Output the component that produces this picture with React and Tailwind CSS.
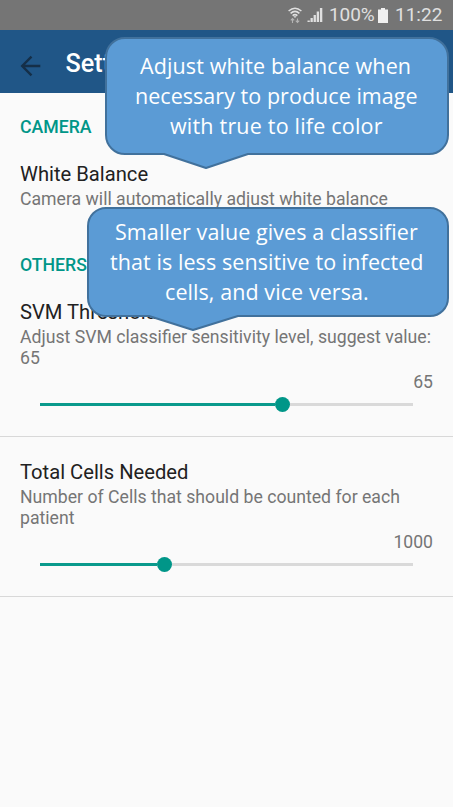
import React from 'react';

function StatusBar() {
  return (
    <div className="flex h-[30px] items-center bg-[#757575] pl-[287px] text-[#e0e0e0]">
      <svg width="16" height="18" viewBox="0 0 16 18" fill="none" stroke="#e0e0e0" strokeWidth="1.5">
        <path d="M1.6 5Q8 -.6 14.4 5M3.600 7.400Q8 3.400 12.400 7.400M5.600 9.600Q8 7.600 10.400 9.600" />
        <path d="M6.400 10.200h3.200L8 12z" fill="#e0e0e0" stroke="none" />
        <path d="M5.500 17v-4.500M3.800 14.400l1.700-1.800 1.700 1.800M10.500 12.500v4M8.800 14.700l1.700 1.800 1.700-1.800" stroke="#b4b4b4" strokeWidth="1.1" />
      </svg>
      <svg className="ml-1" width="17" height="16" viewBox="0 0 17 16" fill="#e0e0e0">
        <path d="M.5 13.500h2.300V15H.5zM3.500 11h2.300v4H3.500zM6.600 8h2.300v7H6.600zM9.700 4.500H12V15H9.700zM12.900 1h2.400v14h-2.400z" />
      </svg>
      <span className="ml-[5px] w-[46px] whitespace-nowrap text-[19px] leading-[30px] tracking-[-0.1px]">100%</span>
      <svg className="ml-[3px]" width="10" height="15" viewBox="0 0 10 15" fill="#f0f0f0">
        <path d="M3 0h4v1.500h3V15H0V1.500h3z" />
      </svg>
      <span className="ml-[7px] text-[19px] leading-[30px]">11:22</span>
    </div>
  );
}

function AppBar() {
  return (
    <div className="flex h-[63px] items-center bg-[#205687] pl-5">
      <svg className="mt-[8px]" width="21" height="22" viewBox="0 0 21 22" fill="none" stroke="#152f48" strokeWidth="2.4">
        <path d="M11.500 1.700 2.200 11l9.300 9.300M2 11h18.300" />
      </svg>
      <h1 className="ml-[24.500px] mt-1 text-[25.200px] font-medium leading-8 text-white">Settings</h1>
    </div>
  );
}

function Category({ children }) {
  return <h2 className="text-[17.700px] font-medium leading-[21px] text-[#009688]">{children}</h2>;
}

function Heading({ title, summary }) {
  return (
    <div>
      <h3 className="text-[20.200px] leading-6 text-[#212121]">{title}</h3>
      <p className="mt-[3px] text-[17.660px] leading-[21px] text-[#757575]">{summary}</p>
    </div>
  );
}

function SliderSetting({ title, summary, value, position }) {
  return (
    <section className="h-[160px] border-b border-[#d8d8d8] px-5 pt-[23px]">
      <Heading title={title} summary={summary} />
      <div className="mt-[3px] text-right text-[17.600px] leading-[21px] text-[#757575]">{value}</div>
      <div className="mx-5 mt-[4px] flex h-[15px] items-center">
        <div className="h-[3px] bg-[#0a9a8c]" style={{ width: position - 7.5 }} />
        <div className="size-[15px] rounded-full bg-[#009688]" />
        <div className="h-[3px] flex-1 bg-[#d9d9d9]" />
      </div>
    </section>
  );
}

function Callout({ className, path, height, width, children }) {
  return (
    <div className={`absolute ${className}`}>
      <svg className="absolute left-0 top-0" width={width} height={height}>
        <path d={path} fill="#5b9bd5" stroke="#41719c" strokeWidth="2" strokeLinejoin="round" />
      </svg>
      <div className="relative flex flex-col whitespace-nowrap font-['Open_Sans','Noto_Sans',sans-serif] text-[21.500px] font-medium leading-[30px] text-white">
        {children}
      </div>
    </div>
  );
}

export default function App() {
  return (
    <main className="relative h-[807px] w-[453px] overflow-hidden bg-[#fafafa] font-['Roboto',sans-serif]">
      <StatusBar />
      <AppBar />
      <div className="px-5 pt-[24px]">
        <Category>CAMERA</Category>
        <div className="mt-[24px]">
          <Heading title="White Balance" summary="Camera will automatically adjust white balance" />
        </div>
        <div className="mt-[45px]">
          <Category>OTHERS</Category>
        </div>
      </div>
      <div className="mt-px">
        <SliderSetting
          title="SVM Threshold"
          summary="Adjust SVM classifier sensitivity level, suggest value: 65"
          value="65"
          position={242.500}
        />
        <SliderSetting
          title="Total Cells Needed"
          summary="Number of Cells that should be counted for each patient"
          value="1000"
          position={124}
        />
      </div>

      <Callout
        className="left-[105px] top-[37px] pt-[14px]"
        width={346}
        height={135}
        path="M20 1H324A19 19 0 0 1 343 20V98A19 19 0 0 1 324 117H143L101 131L59 117H20A19 19 0 0 1 1 98V20A19 19 0 0 1 20 1Z"
      >
        <span className="ml-[35px] tracking-[0.120px]">Adjust white balance when</span>
        <span className="ml-[30px] tracking-[0.040px]">necessary to produce image</span>
        <span className="ml-[65px] tracking-[0.200px]">with true to life color</span>
      </Callout>
      <Callout
        className="left-[87px] top-[207px] pt-[10px]"
        width={364}
        height={126}
        path="M19 1H343A18 18 0 0 1 361 19V91A18 18 0 0 1 343 109H151L106 123L62 109H19A18 18 0 0 1 1 91V19A18 18 0 0 1 19 1Z"
      >
        <span className="ml-[28px] tracking-[0.080px]">Smaller value gives a classifier</span>
        <span className="ml-[23px] tracking-[0.080px]">that is less sensitive to infected</span>
        <span className="ml-[78px] tracking-[0.080px]">cells, and vice versa.</span>
      </Callout>
    </main>
  );
}
